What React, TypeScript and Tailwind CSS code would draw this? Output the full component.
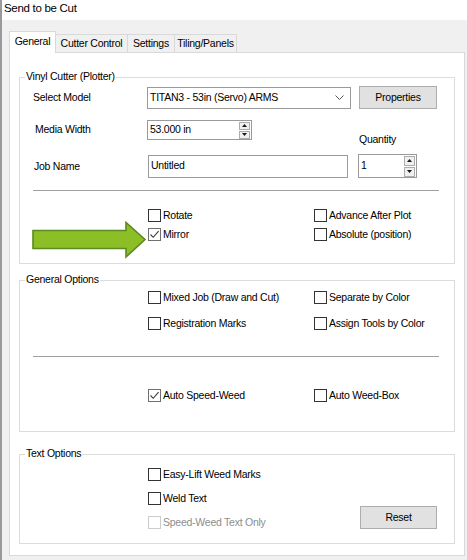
import React from 'react';

type CheckProps = { label: string; checked?: boolean; disabled?: boolean };

function Check({ label, checked, disabled }: CheckProps) {
  const box = disabled ? 'border-[#cccccc]' : checked ? 'border-[#707070]' : 'border-[#333333]';
  return (
    <div className="flex h-[19px] items-center">
      <span className={`flex h-[13px] w-[13px] flex-shrink-0 items-center justify-center border bg-white ${box}`}>
        {checked && (
          <svg width="11" height="11" viewBox="0 0 11 11">
            <path d="M1.5 5.5 L4.2 8.3 L9.6 2.2" fill="none" stroke="#3a3a3a" strokeWidth="1.1" />
          </svg>
        )}
      </span>
      <span className={`ml-[2px] whitespace-nowrap ${disabled ? 'text-[#8d8d8d]' : 'text-black'}`}>{label}</span>
    </div>
  );
}

function Spinner({ tall }: { tall?: boolean }) {
  const h = tall ? 'h-[10px]' : 'h-[8px]';
  return (
    <div className="mr-[1px] flex w-[11px] flex-col gap-[1px]">
      <span className={`flex ${h} items-center justify-center border border-[#adadad] bg-[#f0f0f0]`}>
        <svg width="5" height="3" viewBox="0 0 5 3"><path d="M0 3 L2.5 0 L5 3 Z" fill="#1a1a1a" /></svg>
      </span>
      <span className={`flex ${h} items-center justify-center border border-[#adadad] bg-[#f0f0f0]`}>
        <svg width="5" height="3" viewBox="0 0 5 3"><path d="M0 0 L2.5 3 L5 0 Z" fill="#1a1a1a" /></svg>
      </span>
    </div>
  );
}

function Group({ title, className, children }: { title: string; className: string; children: React.ReactNode }) {
  return (
    <div className={`relative box-border border border-[#dcdcdc] ${className}`}>
      <span className="absolute -top-[9px] left-[5px] bg-white px-[1px] leading-[14px] text-black">{title}</span>
      {children}
    </div>
  );
}

function Button({ label, className }: { label: string; className: string }) {
  return (
    <div className={`flex items-center justify-center border border-[#adadad] bg-[#e1e1e1] text-black ${className}`}>
      {label}
    </div>
  );
}

function Arrow() {
  return (
    <svg className="absolute left-[12px] top-[143px]" width="116" height="38" viewBox="0 0 116 38">
      <path
        d="M1 9.5 L94 9.5 L94 1.5 L113 18.5 L94 36 L94 27.5 L1 27.5 Z"
        fill="#8cbf26"
        stroke="#5b8a1d"
        strokeWidth="1.6"
        strokeLinejoin="miter"
      />
    </svg>
  );
}

export default function App() {
  const tabs = [
    { label: 'Cutter Control', w: 'w-[73px]' },
    { label: 'Settings', w: 'w-[47px]' },
    { label: 'Tiling/Panels', w: 'w-[62px]' },
  ];

  return (
    <div className="box-border h-[560px] w-[467px] overflow-hidden border-l-2 border-[#9a9a9a] bg-[#f0f0f0] font-['Liberation_Sans',Arial,sans-serif] text-[10.5px] tracking-[-0.25px] text-black">
      {/* title bar */}
      <div className="flex h-[20px] items-center bg-white pb-[2px] pl-[2px] text-[11.5px] tracking-[-0.3px]">Send to be Cut</div>

      {/* tabs */}
      <div className="ml-[7px] mt-[11px] flex h-[21px] items-end">
        <div className="relative z-10 -mb-[1px] flex h-[22px] w-[47px] items-center justify-center border border-b-0 border-[#d9d9d9] bg-white pb-[2px]">
          General
        </div>
        {tabs.map((t, i) => (
          <div
            key={t.label}
            className={`flex h-[18px] ${t.w} items-center justify-center border-t border-r border-[#d9d9d9] bg-[#f0f0f0] ${i === 0 ? '-ml-[1px] border-l' : ''}`}
          >
            {t.label}
          </div>
        ))}
      </div>

      {/* tab panel */}
      <div className="ml-[7px] box-border h-[504px] w-[456px] border border-[#d9d9d9] bg-white px-[9px] pt-[24px]">
        <Group title="Vinyl Cutter (Plotter)" className="h-[187px]">
          <div className="mt-[8px] flex h-[23px] items-center pl-[13px]">
            <span className="w-[114px]">Select Model</span>
            <div className="flex h-[22px] w-[204px] items-center justify-between border border-[#9a9a9a] bg-white pl-[2px] pr-[6px]">
              <span>TITAN3 - 53in (Servo) ARMS</span>
              <svg width="9" height="5" viewBox="0 0 9 5"><path d="M0.5 0.5 L4.5 4.5 L8.5 0.5" fill="none" stroke="#555" strokeWidth="1" /></svg>
            </div>
            <Button label="Properties" className="ml-[8px] h-[23px] w-[78px]" />
          </div>

          <div className="mt-[11px] flex pl-[13px]">
            <div className="flex w-[318px] flex-col">
              <div className="flex h-[20px] items-center">
                <span className="w-[114px] pl-[2px]">Media Width</span>
                <div className="flex h-[20px] w-[105px] items-center justify-between border border-[#9a9a9a] bg-white pl-[2px]">
                  <span>53.000 in</span>
                  <Spinner />
                </div>
              </div>
              <div className="mt-[15px] flex h-[23px] items-center">
                <span className="w-[115px] pl-[1px]">Job Name</span>
                <div className="flex h-[23px] w-[200px] items-center border border-[#9a9a9a] bg-white pb-[2px] pl-[2px]">Untitled</div>
              </div>
            </div>
            <div className="ml-[7px] flex flex-col justify-end">
              <span className="mb-[6px] pl-[1px]">Quantity</span>
              <div className="flex h-[24px] w-[59px] items-center justify-between border border-[#9a9a9a] bg-white pl-[2px]">
                <span>1</span>
                <Spinner tall />
              </div>
            </div>
          </div>

          <div className="ml-[13px] mt-[12px] h-px w-[406px] bg-[#a0a0a0]" />

          <div className="mt-[15px] grid grid-cols-[166px_1fr] pl-[128px]">
            <Check label="Rotate" />
            <Check label="Advance After Plot" />
            <Check label="Mirror" checked />
            <Check label="Absolute (position)" />
          </div>

          <Arrow />
        </Group>

        <Group title="General Options" className="mt-[16px] h-[152px]">
          <div className="mt-[7px] grid grid-cols-[166px_1fr] gap-y-[7px] pl-[128px]">
            <Check label="Mixed Job (Draw and Cut)" />
            <Check label="Separate by Color" />
            <Check label="Registration Marks" />
            <Check label="Assign Tools by Color" />
          </div>
          <div className="ml-[13px] mt-[23px] h-px w-[406px] bg-[#a0a0a0]" />
          <div className="mt-[29px] grid grid-cols-[166px_1fr] pl-[128px]">
            <Check label="Auto Speed-Weed" checked />
            <Check label="Auto Weed-Box" />
          </div>
        </Group>

        <Group title="Text Options" className="mt-[22px] h-[90px]">
          <div className="mt-[10px] flex pl-[128px]">
            <div className="flex w-[212px] flex-col gap-[5px]">
              <Check label="Easy-Lift Weed Marks" />
              <Check label="Weld Text" />
              <Check label="Speed-Weed Text Only" disabled />
            </div>
            <Button label="Reset" className="mb-[3px] h-[23px] w-[77px] self-end" />
          </div>
        </Group>
      </div>
    </div>
  );
}
